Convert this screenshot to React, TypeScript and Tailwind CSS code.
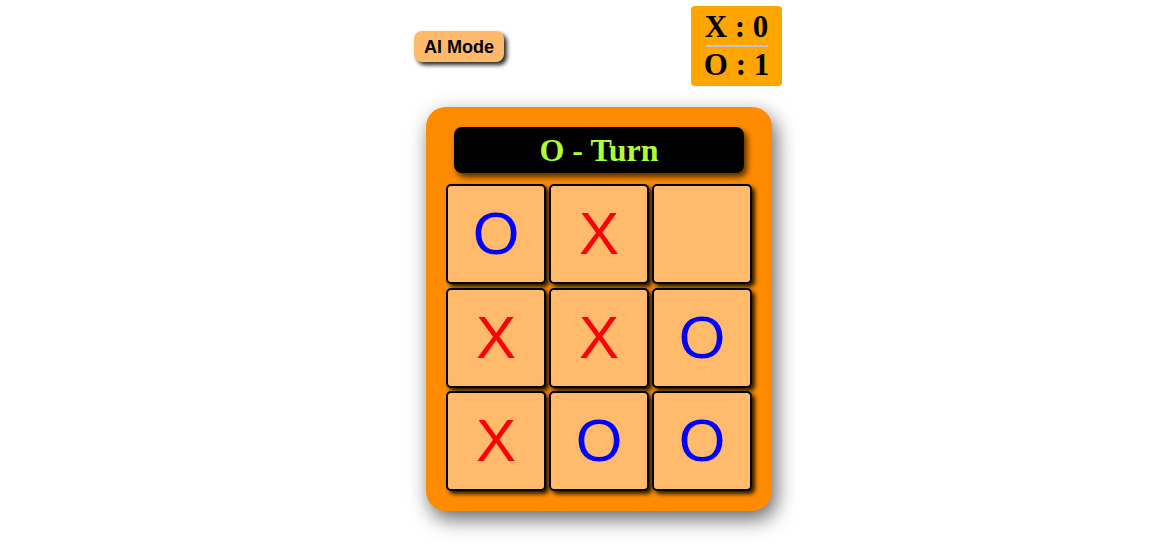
import { useState } from 'react';

type Mark = 'X' | 'O' | '';

const initialBoard: Mark[] = ['O', 'X', '', 'X', 'X', 'O', 'X', 'O', 'O'];

export default function App() {
  const [board] = useState<Mark[]>(initialBoard);
  const [turn] = useState<'X' | 'O'>('O');
  const [score] = useState({ x: 0, o: 1 });

  return (
    <div className="min-h-screen w-full bg-white flex justify-center pl-[29px]">
      <div className="w-[368px] flex flex-col pt-[6px]">
        <div className="flex justify-between items-start">
          <button className="mt-[25px] h-[31px] px-[10px] rounded-[8px] bg-[#ffb96b] text-black font-bold text-[18px] leading-none font-['Liberation_Sans',Arial,sans-serif] shadow-[3px_3px_4px_rgba(0,0,0,0.85)]">
            AI Mode
          </button>
          <div className="w-[91px] h-[80px] bg-[#ffa500] rounded-[4px] flex flex-col items-center justify-center font-['Liberation_Serif','Times_New_Roman',serif] font-bold text-[31px] leading-[34px] text-black">
            <span>X : {score.x}</span>
            <div className="w-[62px] h-[2px] bg-[#b8c8dc] my-[1px]" />
            <span>O : {score.o}</span>
          </div>
        </div>

        <div className="mt-[21px] mx-[12px] w-[346px] bg-[#ff8c00] rounded-[20px] pt-[20px] pb-[20px] px-[20px] flex flex-col items-center shadow-[4px_8px_20px_rgba(0,0,0,0.6)]">
          <div className="w-[290px] h-[46px] bg-black rounded-[8px] flex items-center justify-center shadow-[3px_4px_6px_rgba(0,0,0,0.7)]">
            <span className="text-[#adff2f] font-bold text-[32px] font-['Liberation_Serif','Times_New_Roman',serif] leading-none">
              {turn} - Turn
            </span>
          </div>
          <div className="mt-[11px] grid grid-cols-3 gap-x-[3px] gap-y-[3.5px]">
            {board.map((cell, i) => (
              <div
                key={i}
                className="w-[100px] h-[100px] bg-[#ffba6b] border-2 border-black rounded-[5px] flex items-center justify-center shadow-[3px_3px_4px_rgba(0,0,0,0.85)]"
              >
                <span
                  className={`text-[60px] leading-none font-['Liberation_Sans',Arial,sans-serif] ${
                    cell === 'X' ? 'text-[#ff0000]' : 'text-[#0000ff]'
                  }`}
                >
                  {cell}
                </span>
              </div>
            ))}
          </div>
        </div>
      </div>
    </div>
  );
}
